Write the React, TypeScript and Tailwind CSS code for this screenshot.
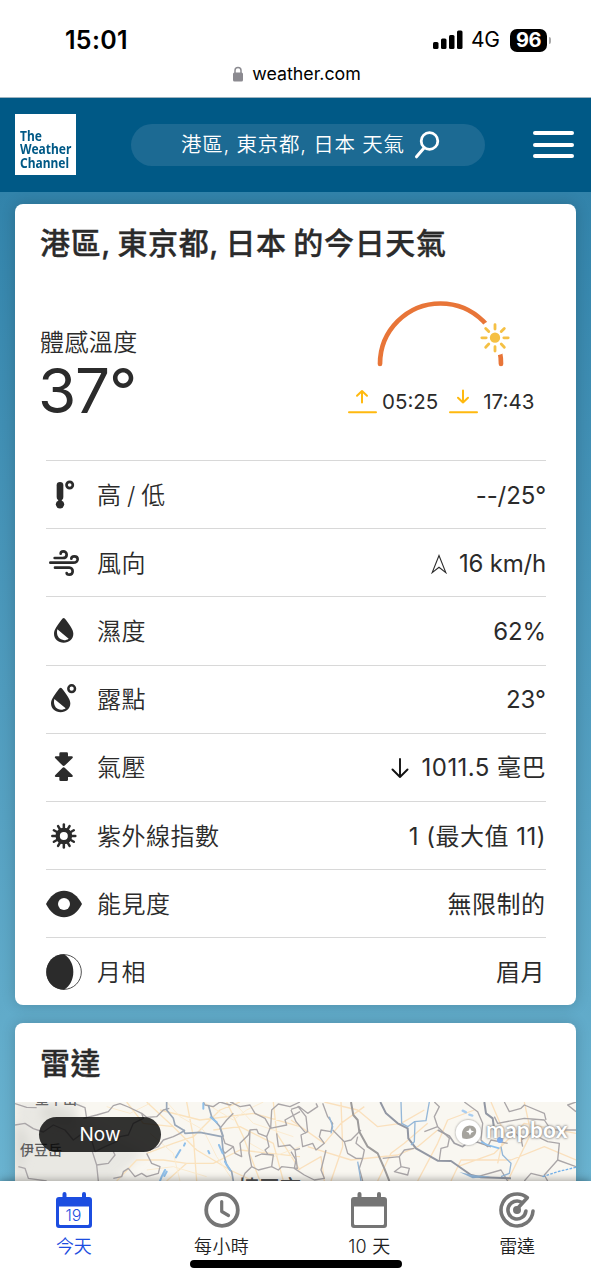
import React from "react";

type Row = { label: string; value: React.ReactNode; icon: React.ReactNode };

const ink = "#2b2b2b";

function RowIcon({ box, children }: { box: string; children: React.ReactNode }) {
  return (
    <svg viewBox={box} className="h-9 w-9 shrink-0" fill={ink}>
      {children}
    </svg>
  );
}

const rows: Row[] = [
  {
    label: "高 / 低",
    value: <span className="tracking-[-0.1px]">--/25°</span>,
    icon: (
      <RowIcon box="138 471 108 108">
        <path d="M180 496V531" stroke={ink} strokeWidth="20" strokeLinecap="round" />
        <circle cx="180" cy="553" r="12.500" />
        <path d="M175 536H185V546H175Z" />
        <circle cx="209" cy="495" r="9.500" fill="none" stroke={ink} strokeWidth="8" />
      </RowIcon>
    ),
  },
  {
    label: "風向",
    value: (
      <>
        <svg viewBox="0 0 16 20" className="mr-[12px] h-5 w-4" fill="none" stroke={ink} strokeWidth="1.1">
          <path d="M8 1.500L1.200 18.600L8 13.200L14.800 18.600Z" />
        </svg>
        <span className="tracking-[-0.200px]">16 km/h</span>
      </>
    ),
    icon: (
      <RowIcon box="48 45 108 108">
        <g fill="none" stroke={ink} strokeWidth="8" strokeLinecap="round" strokeLinejoin="round">
          <path d="M61 98H130C138 98 143 93 143 88C143 82 138 79 133 79C128 79 124 82 124 86" />
          <path d="M74 84H98C106 84 110 79 110 74C110 68 105 64 100 64C95 64 92 67 92 71" />
          <path d="M75 113H118C124 113 128 118 128 124C128 130 124 134 118 134C114 134 110 132 110 129" />
        </g>
      </RowIcon>
    ),
  },
  {
    label: "濕度",
    value: <span className="tracking-[-0.100px]">62%</span>,
    icon: (
      <RowIcon box="48 252 108 108">
        <path d="M101 267Q104 267 108 273C118 287 130 301 130 314C130 330 117 341 101 341C85 341 72 330 72 314C72 301 84 287 94 273Q98 267 101 267Z" />
        <path d="M82 301L116 329C109 334 100 335 93 331C83 326 79 315 82 301Z" fill="#fff" />
      </RowIcon>
    ),
  },
  {
    label: "露點",
    value: <span>23°</span>,
    icon: (
      <RowIcon box="48 456 108 108">
        <path d="M92 476Q95 476 99 482C109 496 121 510 121 523C121 539 108 550 92 550C76 550 63 539 63 523C63 510 75 496 85 482Q89 476 92 476Z" />
        <path d="M73 510L107 538C100 543 91 544 84 540C74 535 70 524 73 510Z" fill="#fff" />
        <circle cx="125" cy="479" r="10" fill="none" stroke={ink} strokeWidth="7.500" />
      </RowIcon>
    ),
  },
  {
    label: "氣壓",
    value: (
      <>
        <svg viewBox="0 0 20 22" className="mr-[12px] h-[22px] w-5" fill="none" stroke="#111" strokeWidth="1.900" strokeLinecap="round" strokeLinejoin="round">
          <path d="M10 2V20M2.500 12.500L10 20L17.500 12.500" />
        </svg>
        <span className="tracking-[0.450px]">1011.5 毫巴</span>
      </>
    ),
    icon: (
      <RowIcon box="48 660 108 108">
        <path d="M92 670H110Q114 670 114 674V682H125Q131 683 127 688L105 709Q101 713 97 709L76 688Q72 683 78 682H88V674Q88 670 92 670Z" />
        <path d="M92 756H110Q114 756 114 752V744H125Q131 743 127 738L105 717Q101 713 97 717L76 738Q72 743 78 744H88V752Q88 756 92 756Z" />
      </RowIcon>
    ),
  },
  {
    label: "紫外線指數",
    value: <span className="tracking-[0.500px]">1 (最大值 11)</span>,
    icon: (
      <RowIcon box="48 84 108 108">
        <circle cx="101.500" cy="138" r="18.500" fill="none" stroke={ink} strokeWidth="13" />
        <g stroke={ink} strokeWidth="7.500" strokeLinecap="round">
          {[0, 30, 60, 90, 120, 150, 180, 210, 240, 270, 300, 330].map((a) => (
            <path key={a} d="M101.500 117V103.500" transform={`rotate(${a} 101.5 138)`} />
          ))}
        </g>
      </RowIcon>
    ),
  },
  {
    label: "能見度",
    value: <span className="-mr-px tracking-[0.500px] pr-[1.500px]">無限制的</span>,
    icon: (
      <RowIcon box="48 288 108 108">
        <path d="M48 342C60 318 79 302 102 302C125 302 144 318 156 342C144 366 125 382 102 382C79 382 60 366 48 342Z" />
        <circle cx="102" cy="342" r="18" fill="#fff" />
      </RowIcon>
    ),
  },
  {
    label: "月相",
    value: <span className="pr-px tracking-[0.500px]">眉月</span>,
    icon: (
      <RowIcon box="48 494 108 108">
        <circle cx="102" cy="548" r="52" fill="#fff" stroke={ink} strokeWidth="2.500" />
        <path d="M102 495C70 495 49 518 49 548C49 578 70 601 102 601C120 590 130 570 130 548C130 526 120 506 102 495Z" />
      </RowIcon>
    ),
  },
];

function StatusBar() {
  return (
    <div className="h-[98px] shrink-0 border-b border-[#9fb4c0] bg-white text-black">
      <div className="flex h-[63px] items-start justify-between pr-[40px] pl-[65px] pt-[22px]">
        <div className="text-[25px] leading-[36px] font-semibold tracking-[0.300px]">15:01</div>
        <div className="flex h-[36px] items-center">
          <svg viewBox="0 0 30 20" className="h-5 w-[30px]">
            <rect x="0" y="12" width="5.500" height="7" rx="1.500" />
            <rect x="8" y="8.500" width="5.500" height="10.500" rx="1.500" />
            <rect x="16" y="5" width="5.500" height="14" rx="1.500" />
            <rect x="24" y="0.500" width="5.500" height="18.500" rx="1.500" />
          </svg>
          <span className="ml-[8px] w-[31px] text-[21px] tracking-[-0.200px] whitespace-nowrap">4G</span>
          <span className="ml-[8px] flex h-[23px] w-[37px] items-center justify-center rounded-[7px] bg-black text-[20px] font-bold tracking-[-0.400px] text-white">96</span>
          <span className="ml-[2px] h-[7px] w-[2px] rounded-r-full bg-[#a9a9a9]" />
        </div>
      </div>
      <div className="flex h-[22px] items-center justify-center pl-[2px]">
        <svg viewBox="0 0 12 16" className="mr-[8px] h-4 w-3">
          <path d="M3 7V4.500A3 3 0 0 1 9 4.500V7" fill="none" stroke="#8b8a90" strokeWidth="1.500" />
          <rect x="1" y="6.500" width="10" height="9" rx="1.500" fill="#8b8a90" />
        </svg>
        <span className="text-[17.800px]">weather.com</span>
      </div>
    </div>
  );
}

function Header() {
  return (
    <header className="flex h-[94px] shrink-0 items-center bg-[#005986] pr-[17px] pl-[15px]">
      <div className="mb-[2px] h-[61px] w-[61px] bg-white pt-[16px] pl-[5px] font-['Noto_Sans'] text-[13.500px] leading-[13.500px] font-bold text-[#005986]">
        <div className="w-max origin-left scale-x-[0.890]">
          The
          <br />
          Weather
          <br />
          Channel
        </div>
      </div>
      <div className="ml-[55px] flex h-[42px] w-[354px] items-center rounded-full bg-[#1c6a93] pl-[50px] text-white">
        <span className="pt-px text-[20.500px] font-[350] tracking-[0.750px] whitespace-nowrap">港區, 東京都, 日本 天氣</span>
        <svg viewBox="0 0 26 28" className="ml-[9px] h-7 w-[26px] shrink-0" fill="none" stroke="#fff" strokeLinecap="round">
          <circle cx="15.500" cy="10" r="8.300" strokeWidth="2.800" />
          <path d="M10 17L2.500 25.800" strokeWidth="3" />
        </svg>
      </div>
      <div className="mb-px ml-auto flex flex-col gap-[7.500px]">
        <span className="h-[4px] w-[41px] rounded-full bg-white" />
        <span className="h-[4px] w-[41px] rounded-full bg-white" />
        <span className="h-[4px] w-[41px] rounded-full bg-white" />
      </div>
    </header>
  );
}

function SunTime({ up, time }: { up: boolean; time: string }) {
  return (
    <div className="flex items-center">
      <svg viewBox="0 0 29 26" className="h-[26px] w-[29px]" fill="none" stroke="#ffb90f" strokeWidth="2" strokeLinecap="round" strokeLinejoin="round">
        <path d={up ? "M14 13.500V2M9 6.700L14 2L19 6.700" : "M14 1.500V13.500M9 8.700L14 13.500L19 8.700"} />
        <path d="M1 23.200H28" />
      </svg>
      <span className="ml-[5px] text-[20.500px] leading-[26px]">{time}</span>
    </div>
  );
}

function Today() {
  return (
    <section className="h-[801.500px] shrink-0 rounded-[8px] bg-white shadow-[0_0_14px_rgba(0,0,0,0.18)]">
      <h1 className="h-[92px] pt-[16px] pl-[25px] text-[30px] leading-[46px] font-medium tracking-[0.650px] whitespace-nowrap [-webkit-text-stroke:0.350px_#2b2b2b] [word-spacing:-2px]">
        港區, 東京都, 日本 的今日天氣
      </h1>
      <div className="flex h-[164.500px] justify-between pr-[39px] pl-[25px]">
        <div className="pt-[30px]">
          <div className="text-[24px] leading-[34px] font-[350] tracking-[0.400px]">體感溫度</div>
          <div className="-ml-[2px] text-[62px] leading-[62px] tracking-[-1.200px]">37°</div>
        </div>
        <div className="w-[189px]">
          <svg viewBox="120 45 435 225" className="-mt-px ml-[22px] h-[75px] w-[145px]">
            <path d="M150 252A181 181 0 0 1 513 252" fill="none" stroke="#e87538" strokeWidth="14" strokeLinecap="round" />
            <circle cx="495" cy="173" r="53" fill="#fff" />
            <circle cx="495" cy="173" r="15.500" fill="#f5c044" />
            <g stroke="#f5c044" strokeWidth="8.500" strokeLinecap="round">
              {[0, 45, 90, 135, 180, 225, 270, 315].map((a) => (
                <path key={a} d="M495 147V134" transform={`rotate(${a} 495 173.500)`} />
              ))}
            </g>
          </svg>
          <div className="mt-[19.500px] flex gap-[11px]">
            <SunTime up time="05:25" />
            <SunTime up={false} time="17:43" />
          </div>
        </div>
      </div>
      <ul className="mr-[30px] ml-[31px]">
        {rows.map((r) => (
          <li key={r.label} className="flex h-[68.200px] items-center border-t-[1.500px] border-[#d8d8d8]">
            {r.icon}
            <span className="ml-[15px] pt-[2px] text-[24px] font-[350] tracking-[0.500px] [word-spacing:-1.800px]">{r.label}</span>
            <span className="ml-auto flex items-center pt-[2px] text-[24px] font-[370]">{r.value}</span>
          </li>
        ))}
      </ul>
    </section>
  );
}

function RadarMap() {
  return (
    <div className="relative h-[79px] overflow-hidden bg-[#f9f7f1]">
      <svg viewBox="0 0 561 79" className="h-[79px] w-[561px]" fill="none" strokeLinejoin="round">
        <defs>
          <filter id="haze" x="-20%" y="-20%" width="140%" height="140%">
            <feGaussianBlur stdDeviation="5" />
          </filter>
          <filter id="mark" x="-10%" y="-30%" width="120%" height="160%">
            <feDropShadow dx="0" dy="0" stdDeviation="1.300" floodColor="#555" floodOpacity="0.750" />
          </filter>
        </defs>
        <path d="M0 0H65L60 15L130 50L100 79H0Z" fill="#e9e8e3" filter="url(#haze)" />
        <path d="M5 25L14 38L8 60L0 79V20ZM30 2L62 14L54 24L25 16Z" fill="#dcdbd6" filter="url(#haze)" />
        <g transform="translate(-15 -92) scale(.33333)">
          <g stroke="#fae2bd" strokeWidth="4">
            <path d="M440 276L520 350L590 420L690 480L760 513M480 300L600 330L760 310L900 350M440 430L520 400L580 380L660 300L720 276M500 513L560 460L640 460L720 420L900 440M560 276L580 380L590 513M680 276L730 380L780 513M820 276L830 370L900 480M350 513L410 450L490 450L560 460M380 276L430 340L520 350M640 360L720 350L820 400L850 513" />
          </g>
          <g stroke="#fbebd0" strokeWidth="3">
            <path d="M450 370L520 430L540 513M500 276L540 320L610 360L650 440L700 513M700 276L760 340L880 380M610 276L700 330L740 300L790 276M440 480L520 470L620 500M750 400L820 440L900 410M320 290L390 310L450 280" />
          </g>
          <g stroke="#aaa6a8" strokeWidth="4">
            <path d="M45 281L80 292L110 293M225 281L255 293L260 325M45 345L75 340L100 356L130 366L160 345L195 360L220 390L255 365L275 390L285 425L315 410L350 395L360 380L385 375L400 340L430 325L425 310L385 291L360 281L340 287L325 305L290 315L250 325M425 310L440 322L470 320L490 300L508 295M277 425L290 465L325 460L345 435L340 425M290 465L295 513M440 430L455 460L480 470L475 490L440 500L425 490L405 500L385 475L370 485L365 500L340 505M55 470L75 475L85 505L140 513" />
            <path d="M540 370L520 380L490 390L475 410L450 420M610 276L615 285L640 290L660 276L690 285L700 276M700 310L680 330L660 355L675 400L700 410L705 430L725 440L720 400L745 375L750 360L770 358L775 370L800 380L810 355L860 345L855 330L900 305M690 276L720 290L750 285L765 310L795 325L812 355L815 300L835 282L870 290L900 276M750 360L747 430L755 470L775 480L815 470L820 435L785 432L765 440M800 380L807 410L795 420L805 435M830 370L835 410L870 405L885 420L900 416M885 420L892 475L845 470L835 480L815 470M700 410L675 430L668 420M755 470L735 490L725 513" />
          </g>
          <g stroke="#99a7b8" strokeWidth="5">
            <path d="M500 276L500 300L520 325L525 345L550 360L555 370L600 367L665 380L670 430L680 465L695 485L700 513M540 370L555 360" />
            <path d="M625 285L635 320L660 350L670 380" />
          </g>
          <g stroke="#8fbfe9" strokeWidth="6" strokeLinecap="round">
            <path d="M632 322L650 337M657 405L668 430M541 420L528 442M555 400L552 407M495 480L485 500L480 513M500 485L493 498M625 423L628 430M610 280V296M675 455L690 480" />
          </g>
        </g>
        <g transform="translate(276 -22) scale(.33333)">
          <g stroke="#fae0bd" strokeWidth="4">
            <path d="M0 120L100 190L150 130L220 80M100 66L200 90L260 140L330 130L400 90M50 200L180 240L320 225L380 200L440 150M260 303L300 220L340 190L410 130M380 303L440 190L470 120L550 90M500 260L610 220L700 130L855 160M480 303L510 240L660 240L760 200L855 240M150 66L155 200L120 303M700 66L720 160L650 303M20 270L90 230L100 303M600 66L640 160L620 250" />
          </g>
          <g stroke="#aaa6a8" strokeWidth="4">
            <path d="M0 88L25 80L50 100L80 80L75 70M20 78L45 110L50 155L30 165L35 200L65 190L75 210L100 190L85 170L90 150L120 155L125 130L110 110L95 70M125 150L160 185L180 180L210 150M160 185L170 220L195 235L215 235L220 210L195 190L200 170M215 235L205 265L215 303M0 215L15 240L10 265L40 285L70 300L100 295L90 270L105 210M0 90L15 125L45 160M275 235L325 230L330 260L355 265L350 285L310 275L330 260M325 230L340 210L370 205M430 66L445 80L430 110L440 140L400 155M440 140L475 175L470 200L450 205L445 240M520 66L560 95L575 130L570 180L590 200L600 180L650 190M610 110L620 130L700 115L760 120L780 150L855 150M640 66L655 95L690 85L700 75L760 100L765 120M855 66L830 75L855 95M660 150L690 175L695 200M690 180L720 160L770 185L805 190L800 240L855 260M800 240L760 285L770 303M560 290L630 270L650 303M700 303L720 280L760 290" />
          </g>
          <path d="M180 66L187 105L200 120L205 155L230 200L260 220L280 265L295 303" stroke="#9d9b9b" strokeWidth="6" />
          <path d="M268 66L285 100L320 130L350 145L352 175L375 205L440 242L480 243L540 285L570 292L660 295M580 66L585 100L605 115L610 150" stroke="#9297a3" strokeWidth="6" />
          <path d="M440 150L475 168L490 190L515 200L540 180L600 200" stroke="#a09fa4" strokeWidth="5" />
          <g stroke="#94b7d8" strokeWidth="4">
            <path d="M330 66L332 130L350 140L370 125L405 122L415 66M372 125L370 185L360 195M630 200L635 225L660 250L655 280L630 290M115 110L125 140L120 160M200 245L210 303" />
            <path d="M515 92L525 97M535 104L544 107" strokeWidth="7" strokeLinecap="round" stroke="#a9cdf0" />
            <path d="M755 290L800 275L855 262" stroke="#74b2ec" strokeDasharray="8 4" />
            <path d="M570 185L590 195L625 205" stroke="#8cc0ee" strokeWidth="5" />
          </g>
          <circle cx="627" cy="180" r="9" fill="#7daef0" />
          <path d="M505 276L545 285L600 290L545 295Z" fill="#8fb4d8" />
        </g>
        <g filter="url(#mark)">
          <circle cx="453.300" cy="30.500" r="12.500" fill="#fff" />
          <path d="M447.500 36.300C445.500 30 448.500 24 454.500 23.500C459.500 23.500 462 27 461 31C459.500 36 453.500 38 447.500 36.300Z" fill="#a5a39d" />
          <path d="M455 25.800L456.200 28.500L459 29.600L456.200 30.700L455 33.400L453.800 30.700L451 29.600L453.800 28.500Z" fill="#fff" />
        </g>
      </svg>
      <span className="absolute top-[-13px] left-[20px] text-[14px] leading-[20px] font-medium text-[#666]">堂平山</span>
      <span className="absolute top-[38px] left-[5px] text-[14px] leading-[20px] font-medium text-[#5c5c5c]">伊豆岳</span>
      <span className="absolute top-[74px] left-[223px] text-[21px] leading-[24px] font-medium text-[#555]">埼玉市</span>
      <span className="absolute top-[15px] left-[24px] flex h-[35px] w-[122px] items-center justify-center rounded-full bg-black/80 pt-[2px] text-[19px] text-white">
        Now
      </span>
      <span className="absolute top-[14px] left-[471px] font-['Lato'] text-[22.500px] leading-[28px] font-bold tracking-[0.300px] text-white [text-shadow:0_0_3px_#777,0_0_2px_#999]">
        mapbox
      </span>
    </div>
  );
}

function Calendar({ color, children }: { color: string; children?: React.ReactNode }) {
  return (
    <svg viewBox="0 0 36 36" className="h-9 w-9">
      <path d="M8.500 2V7M28 2V7" stroke={color} strokeWidth="4" strokeLinecap="round" />
      <path fillRule="evenodd" fill={color} d="M3 5H33Q36 5 36 8V33Q36 36 33 36H3Q0 36 0 33V8Q0 5 3 5ZM3 14.500V31.500Q3 33 4.500 33H31.500Q33 33 33 31.500V14.500Z" />
      {children}
    </svg>
  );
}

function TabBar() {
  const gray = "#757575";
  const item = "flex w-[147.750px] flex-col items-center text-[18px] font-[350] text-[#222]";
  return (
    <nav className="relative flex h-[99px] shrink-0 bg-white pt-[11px] shadow-[0_-1px_8px_rgba(0,0,0,0.350)]">
      <div className="flex w-[147.750px] flex-col items-center text-[18px] font-[350] text-[#1c4de0]">
        <Calendar color="#1c4de0">
          <text x="17.500" y="29" textAnchor="middle" fontSize="16" fontFamily="Inter" fill="#1c4de0">19</text>
        </Calendar>
        <span className="mt-[6px] leading-[26px]">今天</span>
      </div>
      <div className={item}>
        <svg viewBox="0 0 36 36" className="h-9 w-9" fill="none" stroke={gray} strokeLinecap="round" strokeLinejoin="round">
          <circle cx="18" cy="18" r="15.800" strokeWidth="3.800" />
          <path d="M17.700 9.500V19.500L24.500 23.500" strokeWidth="3.200" />
        </svg>
        <span className="mt-[6px] leading-[26px] tracking-[0.400px]">每小時</span>
      </div>
      <div className={item}>
        <Calendar color={gray} />
        <span className="mt-[6px] leading-[26px] tracking-[0.200px]">10 天</span>
      </div>
      <div className={item}>
        <svg viewBox="0 0 36 36" className="h-9 w-9" fill="none" stroke={gray} strokeWidth="3.600" strokeLinecap="round" strokeLinejoin="round">
          <path d="M34 19A16 16 0 1 1 28.300 5.700L18 17" />
          <path d="M26.900 19A9 9 0 1 1 22.500 10.200" />
          <circle cx="18" cy="18" r="2.200" fill={gray} />
        </svg>
        <span className="mt-[6px] leading-[26px]">雷達</span>
      </div>
      <span className="absolute top-[79px] left-[190px] h-[8px] w-[212px] rounded-full bg-black" />
    </nav>
  );
}

export default function App() {
  return (
    <div className="flex h-[1280px] w-[591px] flex-col overflow-hidden bg-white font-['Inter','Noto_Sans_CJK_TC',sans-serif] text-[#2b2b2b]">
      <StatusBar />
      <Header />
      <main className="flex h-[989px] flex-col overflow-hidden bg-linear-to-b from-[#3283aa] to-[#6ab3d0] px-[15px] pt-[11.500px]">
        <Today />
        <section className="mt-[18px] h-[200px] shrink-0 rounded-[8px] bg-white shadow-[0_0_14px_rgba(0,0,0,0.180)]">
          <h2 className="h-[79px] pt-[17px] pl-[25px] text-[30px] leading-[46px] font-medium tracking-[0.500px] [-webkit-text-stroke:0.350px_#2b2b2b]">雷達</h2>
          <RadarMap />
        </section>
      </main>
      <TabBar />
    </div>
  );
}
